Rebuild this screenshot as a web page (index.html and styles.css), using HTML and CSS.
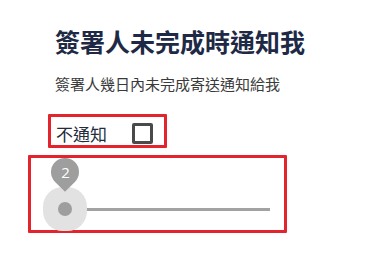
FILE: index.html
```html
<!doctype html>
<html>
<head>
    <meta charset="UTF-8">
    <title>簽署人未完成時通知我</title>
    <link rel="stylesheet" href="styles.css">
</head>
<body>
    <div class="wrap">
        <h1 class="title">簽署人未完成時通知我</h1>
        <p class="desc">簽署人幾日內未完成寄送通知給我</p>

        <label class="opt-row mark">
            <span class="opt-text">不通知</span>
            <span class="check"></span>
        </label>

        <div class="slider-box mark">
            <div class="slider">
                <span class="thumb"></span>
                <span class="pin"><b>2</b></span>
            </div>
        </div>
    </div>
</body>
</html>
```

FILE: styles.css
```css
* { margin: 0; padding: 0; box-sizing: border-box; }
body { background: #fff; font-family: "Noto Sans CJK TC", "Noto Sans", sans-serif; }

.wrap { padding: 25px 0 0 55px; }

.title { font-size: 25px; line-height: 32px; font-weight: 700; color: #1e2a45; }
.desc { margin-top: 17px; font-size: 15px; line-height: 20px; color: #3a3a3a; }

/* red highlight boxes */
.mark { border: 3px solid #e3242d; border-radius: 1px; }

.opt-row {
    display: flex;
    align-items: center;
    width: 119px;
    height: 34px;
    margin: 20px 0 0 -7px;
    padding: 6px 11px 1px 5px;
}
.opt-text { font-size: 17px; line-height: 21px; color: #232c3c; }
.check {
    width: 21px;
    height: 21px;
    margin-left: auto;
    border: 3px solid #4a4a4a;
    border-radius: 2px;
    background: #fff;
}

.slider-box {
    width: 259px;
    margin: 7px 0 0 -27px;
    padding: 50px 14px 19px 34px;
}
.slider { position: relative; width: 205px; height: 3px; background: #a2a2a2; }
.thumb {
    position: absolute;
    left: -7px;
    top: -6px;
    width: 14px;
    height: 14px;
    border-radius: 50%;
    background: #9e9e9e;
    box-shadow: 0 0 0 15px #e2e2e2;
}
.pin {
    position: absolute;
    left: -14px;
    top: -50px;
    width: 28px;
    height: 28px;
    display: flex;
    align-items: center;
    justify-content: center;
    background: #9e9e9e;
    border-radius: 50% 50% 50% 0;
    transform: rotate(-45deg);
}
.pin b {
    transform: rotate(45deg);
    font-family: "Open Sans", "Noto Sans", sans-serif;
    font-weight: 400;
    font-size: 15px;
    line-height: 1;
    color: #fff;
}
```
